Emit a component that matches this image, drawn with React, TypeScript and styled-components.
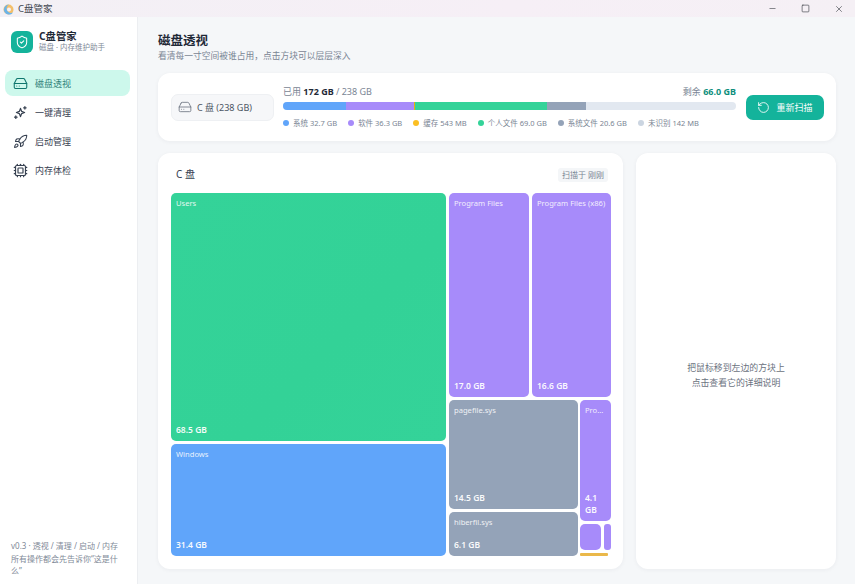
import React from "react";
import styled, { createGlobalStyle } from "styled-components";
import { HardDrive, Rocket, Cpu, ShieldCheck, RotateCcw, Minus, Square, X } from "lucide-react";

const Global = createGlobalStyle`
  html, body { margin: 0; padding: 0; height: 100%; }
  body { font-family: "Noto Sans", "Noto Sans CJK SC", sans-serif; color: #1f2937; overflow: hidden; }
  * { box-sizing: border-box; }
`;

const Shell = styled.div`
  width: 855px; height: 584px; display: flex; flex-direction: column; background: #f5f7f9;
`;
const TitleBar = styled.div`
  height: 17px; flex: none; display: flex; align-items: center; padding-left: 3px;
  background: linear-gradient(90deg, #f3f0f5, #f6eff6 60%, #f5f0f5);
`;
const AppTitle = styled.span`
  font-size: 9.5px; color: #3f4650; margin-left: 4px; flex: 1; line-height: 17px;
`;
const WinButton = styled.div`
  width: 33px; display: flex; justify-content: center; color: #2f343a;
`;
const Body = styled.div`
  flex: 1; display: flex; min-height: 0;
`;
const Sidebar = styled.aside`
  width: 138px; flex: none; background: #fff; border-right: 1px solid #eceef1;
  display: flex; flex-direction: column; padding: 13px 7px 0 5px;
`;
const Brand = styled.div`
  display: flex; align-items: center; gap: 6px; padding-left: 6px; height: 24px;
`;
const BrandLogo = styled.div`
  width: 22px; height: 22px; border-radius: 6px; background: #14b39b; color: #fff;
  display: flex; align-items: center; justify-content: center;
`;
const BrandText = styled.div`
  display: flex; flex-direction: column; margin-top: -1px;
`;
const BrandName = styled.div`
  font-size: 10.3px; line-height: 12px; font-weight: 700; color: #1f2937;
`;
const BrandSub = styled.div`
  font-size: 7.5px; line-height: 11px; color: #7f8a98;
`;
const Nav = styled.nav`
  display: flex; flex-direction: column; gap: 3px; margin-top: 16px;
`;
const NavItem = styled.div<{ $active?: boolean }>`
  height: 26px; border-radius: 8px; display: flex; align-items: center; gap: 7px; padding-left: 8px;
  font-size: 9px; color: ${p => (p.$active ? "#2f7f78" : "#374151")};
  background: ${p => (p.$active ? "#cdf8ec" : "transparent")};
`;
const SideFoot = styled.div`
  margin-top: auto; padding: 0 10px 6px 6px; font-size: 8px; line-height: 12.7px; color: #7f8a98;
`;
const Main = styled.main`
  flex: 1; min-width: 0; padding: 16px 19px 15px 20px; display: flex; flex-direction: column;
`;
const PageTitle = styled.h1`
  margin: 0; font-size: 12.5px; line-height: 16px; font-weight: 700; color: #1f2937;
`;
const PageSub = styled.p`
  margin: 1px 0 0; font-size: 8.75px; line-height: 13px; color: #7a8594;
`;
const Card = styled.section`
  background: #fff; border-radius: 12px; box-shadow: 0 1px 4px rgba(30, 41, 59, 0.05);
`;
const Summary = styled(Card)`
  margin-top: 10px; height: 68px; flex: none; display: flex; align-items: center; padding: 0 12px 0 13px;
`;
const DrivePill = styled.div`
  width: 103px; height: 27px; flex: none; border-radius: 7px; background: #f6f7f9; border: 1px solid #eef0f3;
  display: flex; align-items: center; gap: 5px; padding-left: 6px; font-size: 9px; color: #4b5563;
`;
const Usage = styled.div`
  width: 453px; margin-left: 9px; flex: none; display: flex; flex-direction: column;
`;
const UsageHead = styled.div`
  display: flex; justify-content: space-between; align-items: baseline; font-size: 9px; line-height: 13px; color: #7a8594;
  b { font-weight: 700; color: #1f2937; }
  b.free { color: #0f8f7d; }
`;
const Bar = styled.div`
  height: 7.5px; margin-top: 4px; border-radius: 4px; background: #e2e8f0; overflow: hidden; display: flex;
`;
const Seg = styled.div<{ $c: string }>`
  height: 100%; background: ${p => p.$c};
`;
const Legend = styled.div`
  margin-top: 7px; display: flex; gap: 11px; font-size: 7.5px; line-height: 12px; color: #7a8594;
`;
const LegendItem = styled.span`
  display: flex; align-items: center; gap: 4px; white-space: nowrap;
`;
const Dot = styled.i<{ $c: string }>`
  width: 6px; height: 6px; border-radius: 50%; background: ${p => p.$c};
`;
const ScanButton = styled.button`
  width: 78px; height: 25px; margin-left: 10px; border: 0; border-radius: 7px; background: #14b39b; color: #fff;
  font: inherit; font-size: 9px; display: flex; align-items: center; justify-content: center; gap: 6px; padding: 0;
`;
const Lower = styled.div`
  margin-top: 12px; flex: 1; min-height: 0; display: flex; gap: 13px;
`;
const MapCard = styled(Card)`
  width: 465px; flex: none; padding: 13px 12px 13px 13px; display: flex; flex-direction: column;
`;
const MapHead = styled.div`
  height: 27px; flex: none; display: flex; justify-content: space-between; align-items: flex-start; padding: 2px 3px 0 5px;
`;
const MapTitle = styled.div`
  font-size: 10px; line-height: 13px; color: #374151;
`;
const ScanTag = styled.div`
  font-size: 8px; line-height: 14px; padding: 0 4px; border-radius: 3px; background: #f4f6f8; color: #7a8594;
`;
const Treemap = styled.div`
  height: 363px; display: flex; gap: 3px;
`;
const Col = styled.div<{ $w?: number }>`
  display: flex; flex-direction: column; gap: 3px; flex: none; height: 100%;
  width: ${p => (p.$w ? `${p.$w}px` : "auto")};
`;
const Row = styled.div<{ $h: number; $gap?: number }>`
  display: flex; gap: ${p => p.$gap ?? 3}px; flex: none; height: ${p => p.$h}px;
`;
const Tile = styled.div<{ $c: string; $w?: number; $h?: number }>`
  flex: none; width: ${p => (p.$w ? `${p.$w}px` : "100%")}; height: ${p => (p.$h ? `${p.$h}px` : "100%")};
  border-radius: 5px; background: ${p => p.$c}; color: #fff;
  display: flex; flex-direction: column; justify-content: space-between; padding: 5px; overflow: hidden;
`;
const BlankTile = styled.div<{ $c: string; $w: number; $h?: number; $r?: number }>`
  flex: none; width: ${p => p.$w}px; height: ${p => (p.$h ? `${p.$h}px` : "100%")};
  border-radius: ${p => p.$r ?? 5}px; background: ${p => p.$c};
`;
const TileName = styled.div`
  font-size: 7.6px; line-height: 10px; opacity: 0.85; white-space: nowrap;
`;
const TileSize = styled.div`
  font-size: 8.5px; line-height: 12px; font-weight: 600; opacity: 0.95;
`;
const DetailCard = styled(Card)`
  flex: 1; display: flex; align-items: center; justify-content: center; text-align: center;
  font-size: 8.9px; line-height: 15px; color: #6b7280; padding-top: 27px;
`;

const GREEN = "linear-gradient(135deg,#34d399,#33d297 60%,#34d399)";
const BLUE = "#60a5fa";
const PURPLE = "#a78bfa";
const SLATE = "#94a3b8";

const segs: [string, number][] = [
  ["#60a5fa", 63], ["#a78bfa", 68], ["#eab308", 1], ["#34d399", 132], ["#94a3b8", 39],
];
const legend: [string, string][] = [
  ["#60a5fa", "系统 32.7 GB"], ["#a78bfa", "软件 36.3 GB"], ["#fbbf24", "缓存 543 MB"],
  ["#34d399", "个人文件 69.0 GB"], ["#94a3b8", "系统文件 20.6 GB"], ["#cbd5e1", "未识别 142 MB"],
];

function TitleLogo() {
  return (
    <svg width="11" height="12" viewBox="0 0 11 12">
      <circle cx="5.5" cy="6.5" r="5" fill="#f3bf6b" />
      <path d="M6 1.6 A5 5 0 1 0 10 9.5 A4 4 0 0 1 6 1.6z" fill="#6ab4ea" />
      <circle cx="6" cy="6.6" r="2" fill="#f3f0f5" />
    </svg>
  );
}

function SparkIcon() {
  return (
    <svg width="15" height="15" viewBox="0 0 24 24" fill="none" stroke="currentColor" strokeWidth="2" strokeLinejoin="round" strokeLinecap="round">
      <path d="M12 5.5 L13.8 10.2 L18.5 12 L13.8 13.8 L12 18.5 L10.2 13.8 L5.5 12 L10.2 10.2 Z" />
      <path d="M19 2.5 v4 M17 4.5 h4" />
      <path d="M4.5 17.5 v4 M2.5 19.5 h4" />
    </svg>
  );
}

export default function App() {
  return (
    <Shell>
      <Global />
      <TitleBar>
        <TitleLogo />
        <AppTitle>C盘管家</AppTitle>
        <WinButton><Minus size={9} strokeWidth={1.5} /></WinButton>
        <WinButton><Square size={9} strokeWidth={1.6} /></WinButton>
        <WinButton><X size={10} strokeWidth={1.4} /></WinButton>
      </TitleBar>
      <Body>
        <Sidebar>
          <Brand>
            <BrandLogo><ShieldCheck size={14} strokeWidth={1.8} /></BrandLogo>
            <BrandText>
              <BrandName>C盘管家</BrandName>
              <BrandSub>磁盘 · 内存维护助手</BrandSub>
            </BrandText>
          </Brand>
          <Nav>
            <NavItem $active><HardDrive size={15} strokeWidth={1.7} color="#0f766e" />磁盘透视</NavItem>
            <NavItem><SparkIcon />一键清理</NavItem>
            <NavItem><Rocket size={15} strokeWidth={1.7} />启动管理</NavItem>
            <NavItem><Cpu size={15} strokeWidth={1.9} />内存体检</NavItem>
          </Nav>
          <SideFoot>v0.3 · 透视 / 清理 / 启动 / 内存<br />所有操作都会先告诉你“这是什么”</SideFoot>
        </Sidebar>
        <Main>
          <PageTitle>磁盘透视</PageTitle>
          <PageSub>看清每一寸空间被谁占用，点击方块可以层层深入</PageSub>
          <Summary>
            <DrivePill><HardDrive size={14} strokeWidth={1.4} color="#6b7280" />C 盘 (238 GB)</DrivePill>
            <Usage>
              <UsageHead>
                <span>已用 <b>172 GB</b> / 238 GB</span>
                <span>剩余 <b className="free">66.0 GB</b></span>
              </UsageHead>
              <Bar>
                {segs.map(([c, w]) => <Seg key={c} $c={c} style={{ width: w }} />)}
              </Bar>
              <Legend>
                {legend.map(([c, t]) => <LegendItem key={t}><Dot $c={c} />{t}</LegendItem>)}
              </Legend>
            </Usage>
            <ScanButton><RotateCcw size={13} strokeWidth={1.6} />重新扫描</ScanButton>
          </Summary>
          <Lower>
            <MapCard>
              <MapHead>
                <MapTitle>C 盘</MapTitle>
                <ScanTag>扫描于 刚刚</ScanTag>
              </MapHead>
              <Treemap>
                <Col $w={275}>
                  <Tile $c={GREEN} $h={248}><TileName>Users</TileName><TileSize>68.5 GB</TileSize></Tile>
                  <Tile $c={BLUE} $h={112}><TileName>Windows</TileName><TileSize>31.4 GB</TileSize></Tile>
                </Col>
                <Col $w={162}>
                  <Row $h={204}>
                    <Tile $c={PURPLE} $w={80}><TileName>Program Files</TileName><TileSize>17.0 GB</TileSize></Tile>
                    <Tile $c={PURPLE} $w={79}><TileName>Program Files (x86)</TileName><TileSize>16.6 GB</TileSize></Tile>
                  </Row>
                  <Row $h={156} $gap={2}>
                    <Col $w={129}>
                      <Tile $c={SLATE} $h={109}><TileName>pagefile.sys</TileName><TileSize>14.5 GB</TileSize></Tile>
                      <Tile $c={SLATE} $h={44}><TileName>hiberfil.sys</TileName><TileSize>6.1 GB</TileSize></Tile>
                    </Col>
                    <Col $w={31}>
                      <Tile $c={PURPLE} $h={121}><TileName>Pro...</TileName><TileSize>4.1<br />GB</TileSize></Tile>
                      <Row $h={26}>
                        <BlankTile $c={PURPLE} $w={21} />
                        <BlankTile $c={PURPLE} $w={7} $r={3} />
                      </Row>
                      <BlankTile $c="#eab84a" $w={28} $h={3} $r={1} />
                    </Col>
                  </Row>
                </Col>
              </Treemap>
            </MapCard>
            <DetailCard>
              <div>把鼠标移到左边的方块上<br />点击查看它的详细说明</div>
            </DetailCard>
          </Lower>
        </Main>
      </Body>
    </Shell>
  );
}
